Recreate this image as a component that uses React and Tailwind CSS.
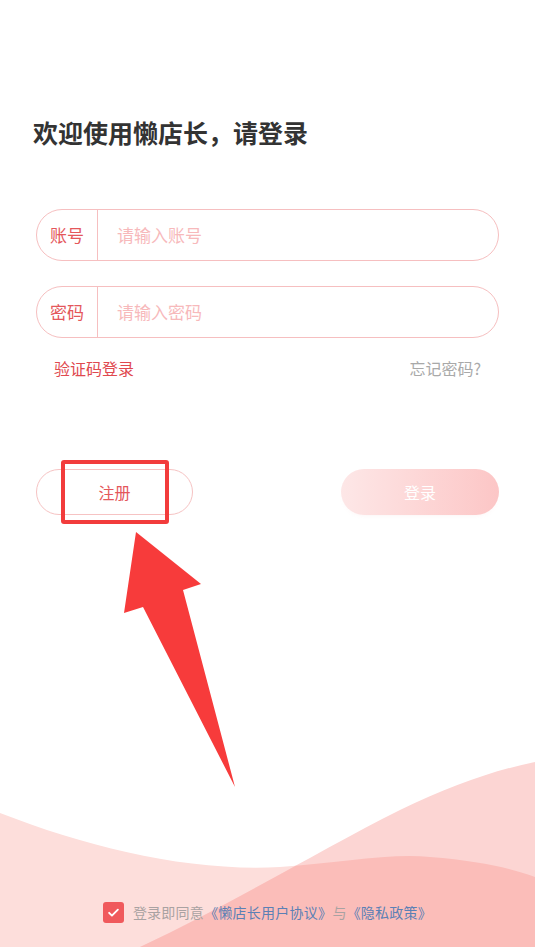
import React from "react";

const font = { fontFamily: '"Noto Sans CJK SC", "Noto Sans", sans-serif' };

function Field({ label, placeholder }) {
  return (
    <div className="flex h-[52px] w-full items-stretch rounded-full border border-[#f6bfc0] bg-white">
      <div className="flex w-[61px] shrink-0 items-center justify-center border-r border-[#f6bfc0] text-[17px] text-[#e4575b]">
        {label}
      </div>
      <div className="flex items-center pl-[19px] text-[17px] text-[#f7b9bb]">{placeholder}</div>
    </div>
  );
}

function Waves() {
  return (
    <svg
      className="absolute bottom-0 left-0 h-[190px] w-[535px]"
      viewBox="0 757 535 190"
      preserveAspectRatio="none"
    >
      <defs>
        <clipPath id="waveA">
          <path d="M0,813 C90,848 190,872 280,867 C340,863 390,853 430,857 C480,861 510,868 535,877 V947 H0 Z" />
        </clipPath>
      </defs>
      <path
        d="M0,813 C90,848 190,872 280,867 C340,863 390,853 430,857 C480,861 510,868 535,877 V947 H0 Z"
        fill="#fddedb"
      />
      <path d="M140,947 C230,905 320,850 400,810 C450,786 495,770 535,762 V947 Z" fill="#fcd5d3" />
      <path
        d="M140,947 C230,905 320,850 400,810 C450,786 495,770 535,762 V947 Z"
        fill="#fbbdb9"
        clipPath="url(#waveA)"
      />
    </svg>
  );
}

export default function App() {
  return (
    <div className="relative flex h-[947px] w-[535px] flex-col overflow-hidden bg-white" style={font}>
      <Waves />

      <div className="relative flex flex-col px-[36px] pt-[120px]">
        <h1 className="-ml-[3px] h-[25px] text-[25px] font-bold leading-[25px] text-[#333333]">
          欢迎使用懒店长，请登录
        </h1>

        <div className="mt-[64px] flex flex-col gap-[25px]">
          <Field label="账号" placeholder="请输入账号" />
          <Field label="密码" placeholder="请输入密码" />
        </div>

        <div className="mt-[19px] flex h-[22px] items-center justify-between pl-[18px] pr-[18px] text-[16px] leading-[22px]">
          <span className="text-[#e0494f]">验证码登录</span>
          <span className="text-[#a9a9a9]">忘记密码?</span>
        </div>

        <div className="mt-[90px] flex items-center justify-between">
          <div className="relative">
            <button className="flex h-[46px] w-[157px] items-center justify-center rounded-full border border-[#f6c3c3] bg-white text-[16px] text-[#e4575b]">
              注册
            </button>
            <div className="absolute left-[25px] top-[-9px] h-[64px] w-[108px] rounded-[3px] border-[4px] border-[#f23c3c]" />
          </div>
          <button className="flex h-[46px] w-[158px] items-center justify-center rounded-full bg-gradient-to-r from-[#fde7e7] to-[#fcc6c6] text-[16px] text-white shadow-[0_3px_5px_-4px_rgba(240,180,180,0.25)]">
            登录
          </button>
        </div>
      </div>

      <svg className="absolute left-0 top-0 h-[947px] w-[535px]" viewBox="0 0 535 947">
        <polygon points="136,532 201,584 183,590 235,787 143,607 124,613" fill="#f73b3b" />
      </svg>

      <div className="relative mt-auto flex items-center justify-center pb-[24px]">
        <div className="flex h-[21px] w-[21px] items-center justify-center rounded-[3px] bg-[#f0595c]">
          <svg viewBox="0 0 24 24" className="h-[15px] w-[15px]" fill="none" stroke="white" strokeWidth="3" strokeLinecap="round" strokeLinejoin="round">
            <path d="M5 12.5l4.5 4.5L19 7.5" />
          </svg>
        </div>
        <div className="ml-[9px] text-[14px] leading-[21px] tracking-[0.25px] text-[#a9a2a2]">
          登录即同意<span className="text-[#5b80b5]">《懒店长用户协议》</span>与<span className="text-[#5b80b5]">《隐私政策》</span>
        </div>
      </div>
    </div>
  );
}
